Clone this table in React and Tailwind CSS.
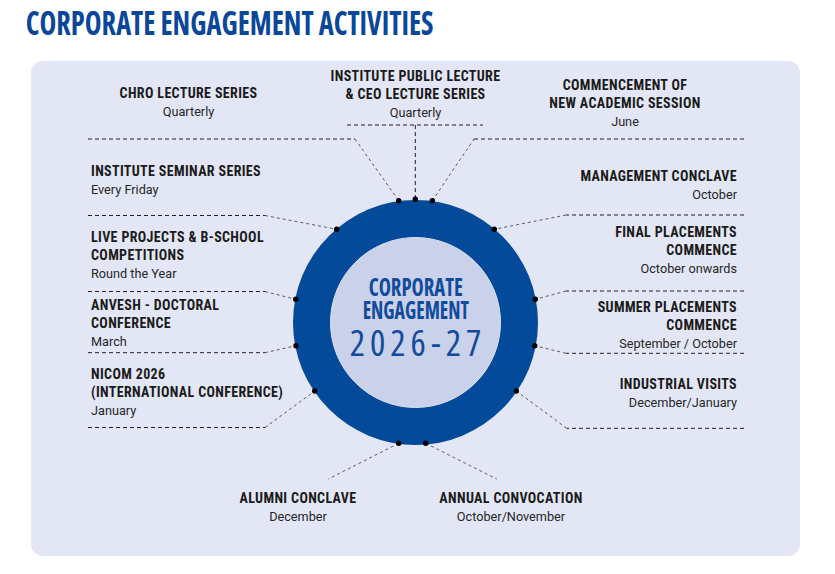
import React from "react";

function Label({ title, sub, className = "" }) {
  return (
    <div className={className}>
      {title.map((t) => (
        <div key={t} className="whitespace-nowrap text-[14px] font-bold leading-[18px] tracking-[0.35px] text-[#1b1b1b] font-stretch-condensed">
          {t}
        </div>
      ))}
      <div className="mt-px whitespace-nowrap text-[12.7px] leading-[18px] text-[#262626] font-stretch-[94%]">{sub}</div>
    </div>
  );
}

const solid = [
  "M57 78 H324",
  "M316 64 H452",
  "M384.3 64 V138.3",
  "M443 78 H713",
  "M57 154.5 H234",
  "M57 230.5 H234",
  "M57 291.7 H234",
  "M57 366.5 H234",
  "M713 154 H535",
  "M713 230 H535",
  "M713 292.3 H535",
  "M713 367.3 H535.7",
];
const diag = [
  "M324 78 L367.7 139.7",
  "M401.3 139.7 L443 78",
  "M234 154.5 L305.7 168.3",
  "M234 230.5 L264.7 238.3",
  "M234 291.7 L265 284.7",
  "M234 366.5 L283.7 330",
  "M535 154 L463.3 168.3",
  "M535 230 L504.3 238.3",
  "M535 292.3 L503.7 284.7",
  "M535.7 367.3 L485.3 330",
  "M367.7 382.3 L297.3 418",
  "M394.7 382.3 L465.7 418",
];
const dots = [
  [367.7, 139.7],
  [384.3, 138.3],
  [401.3, 139.7],
  [305.7, 168.3],
  [463.3, 168.3],
  [264.7, 238.3],
  [504.3, 238.3],
  [265, 284.7],
  [503.7, 284.7],
  [283.7, 330],
  [485.3, 330],
  [367.7, 382.3],
  [394.7, 382.3],
];

function Connectors() {
  return (
    <svg className="pointer-events-none absolute inset-0 z-10" width="769" height="495" viewBox="0 0 769 495">
      {solid.map((d) => (
        <path key={d} d={d} stroke="#1e1e1e" strokeWidth="1" strokeDasharray="4 3" fill="none" />
      ))}
      {diag.map((d) => (
        <path key={d} d={d} stroke="#4a4a4a" strokeWidth="0.9" strokeDasharray="3 3" fill="none" />
      ))}
      {dots.map(([x, y]) => (
        <circle key={x + "-" + y} cx={x} cy={y} r="2.7" fill="#000" />
      ))}
    </svg>
  );
}

export default function App() {
  return (
    <div className="h-[574px] w-[835px] bg-white font-['Roboto',sans-serif]">
      <h1 className="origin-left scale-x-[0.86] pl-[30px] pt-[3px] font-['Open_Sans',sans-serif] text-[33px] font-bold leading-[40px] whitespace-nowrap text-[#0a479b] font-stretch-[75%]">
        CORPORATE ENGAGEMENT ACTIVITIES
      </h1>
      <div className="relative ml-[31px] mt-[18px] h-[495px] w-[769px] rounded-[12px] bg-[#e3e7f5]">
        <Connectors />
        {/* top row */}
        <div className="flex h-[100px] items-start pl-[67px]">
          <Label className="w-[181px] pt-[22.5px] text-center" title={["CHRO LECTURE SERIES"]} sub="Quarterly" />
          <Label
            className="ml-[7px] w-[259px] pt-[6px] text-center"
            title={["INSTITUTE PUBLIC LECTURE", "& CEO LECTURE SERIES"]}
            sub="Quarterly"
          />
          <Label
            className="w-[160px] pt-[14.5px] text-center"
            title={["COMMENCEMENT OF", "NEW ACADEMIC SESSION"]}
            sub="June"
          />
        </div>
        {/* middle */}
        <div className="flex h-[300px]">
          <div className="flex w-[262px] flex-col pl-[60px] pt-px">
            <Label title={["INSTITUTE SEMINAR SERIES"]} sub="Every Friday" />
            <Label className="mt-[28.7px]" title={["LIVE PROJECTS & B-SCHOOL", "COMPETITIONS"]} sub="Round the Year" />
            <Label className="mt-[13.3px]" title={["ANVESH - DOCTORAL", "CONFERENCE"]} sub="March" />
            <Label className="mt-[14px]" title={["NICOM 2026", "(INTERNATIONAL CONFERENCE)"]} sub="January" />
          </div>
          <div className="mt-[39px] flex h-[245px] w-[245px] shrink-0 items-center justify-center rounded-full bg-[#034a9a]">
            <div className="flex h-[171px] w-[171px] flex-col items-center rounded-full border border-[#dfe2ec] bg-[#c9d1eb] pt-[36.6px] font-['Open_Sans',sans-serif] text-[#134b9c] font-stretch-[75%]">
              <div className="h-[23px] scale-x-[0.86] text-[24px] font-bold leading-[23px]">CORPORATE</div>
              <div className="h-[23px] scale-x-[0.82] text-[24px] font-bold leading-[23px]">ENGAGEMENT</div>
              <div className="mt-[3px] pl-[5px] text-[36px] font-medium leading-[38px] tracking-[5px]">2026-27</div>
            </div>
          </div>
          <div className="flex w-[199px] flex-col items-end pt-[6.2px] text-right">
            <Label title={["MANAGEMENT CONCLAVE"]} sub="October" />
            <Label className="mt-[18.7px]" title={["FINAL PLACEMENTS", "COMMENCE"]} sub="October onwards" />
            <Label className="mt-[20.6px]" title={["SUMMER PLACEMENTS", "COMMENCE"]} sub="September / October" />
            <Label className="mt-[21.7px]" title={["INDUSTRIAL VISITS"]} sub="December/January" />
          </div>
        </div>
        {/* bottom */}
        <div className="flex pl-[187px] pt-[28px]">
          <Label className="w-[160px] text-center" title={["ALUMNI CONCLAVE"]} sub="December" />
          <Label className="ml-[53px] w-[160px] text-center" title={["ANNUAL CONVOCATION"]} sub="October/November" />
        </div>
      </div>
    </div>
  );
}
